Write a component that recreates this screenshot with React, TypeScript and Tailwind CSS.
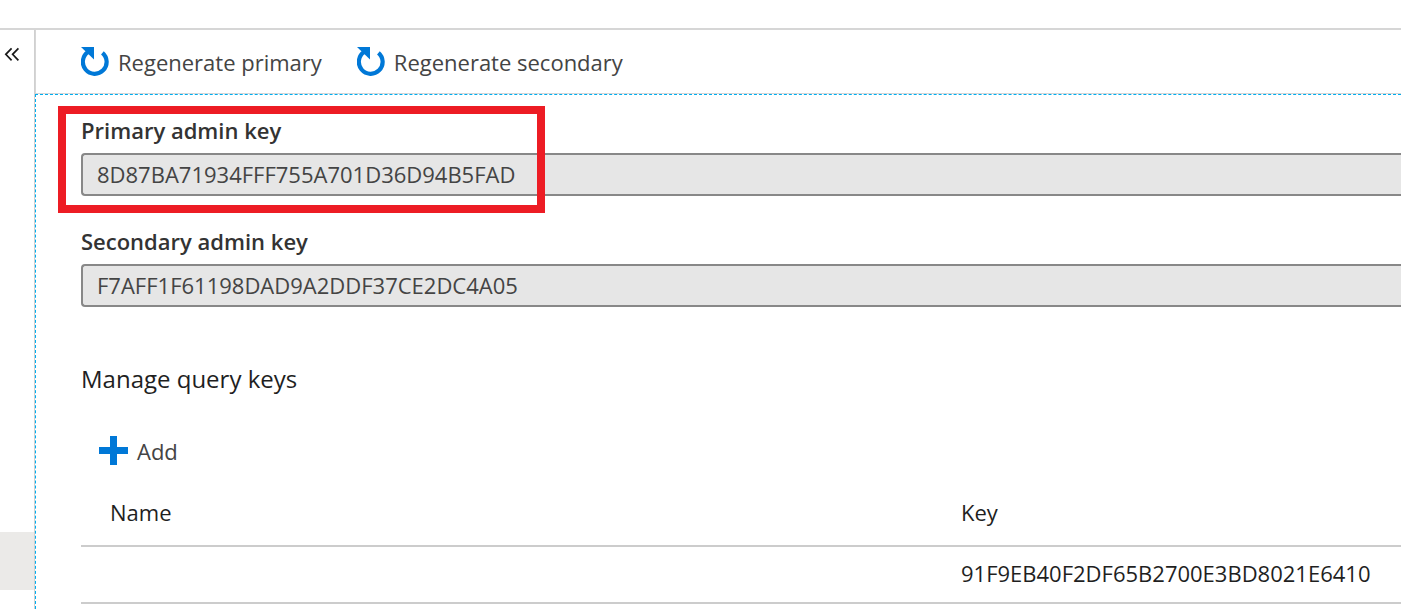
import React from "react";

function CollapseIcon() {
  return (
    <svg viewBox="0 0 16 16" className="block h-4 w-4" fill="none" stroke="#1a1a1a" strokeWidth="1.7" aria-hidden="true">
      <path d="M7.6 2.3 1.8 8.3l5.8 6M14.4 2.3 8.6 8.3l5.8 6" />
    </svg>
  );
}

function RegenerateIcon() {
  return (
    <svg viewBox="0 0 28 30" className="block h-[30px] w-7 shrink-0" aria-hidden="true">
      <path d="M21.4 5.8A11.9 11.9 0 1 1 7 5.1" fill="none" stroke="#0078d7" strokeWidth="4.2" />
      <path d="M0 0H13V12.6Z" fill="#0078d7" />
    </svg>
  );
}

function AddIcon() {
  return (
    <svg viewBox="0 0 29 30" className="block h-[30px] w-[29px] shrink-0" aria-hidden="true">
      <path d="M11 0h7v11h11v7H18v11h-7V18H0v-7h11z" fill="#0078d7" />
    </svg>
  );
}

function CommandButton({ icon, label }: { icon: React.ReactNode; label: string }) {
  return (
    <button type="button" className="flex items-center gap-[9px] whitespace-nowrap text-[22px] leading-8 text-[#444444]">
      {icon}
      <span>{label}</span>
    </button>
  );
}

type KeyFieldProps = { id: string; label: string; value: string; highlighted?: boolean };

function KeyField({ id, label, value, highlighted = false }: KeyFieldProps) {
  return (
    <div className="relative flex flex-col gap-2">
      <label htmlFor={id} className="text-[22px] font-semibold leading-[30px] text-[#333333]">
        {label}
      </label>
      <input
        id={id}
        type="text"
        readOnly
        value={value}
        className="h-[43px] w-full rounded-l-[4px] border-2 border-r-0 border-[#888888] bg-[#e6e6e6] px-3.5 pb-0.5 text-[22px] text-[#444444] outline-none"
      />
      {highlighted && (
        <div className="pointer-events-none absolute -bottom-[17px] -left-[23px] -top-[9px] w-[487px] border-8 border-[#ed1c24]" />
      )}
    </div>
  );
}

const queryKeys = [{ name: "", key: "91F9EB40F2DF65B2700E3BD8021E6410" }];

export default function App() {
  return (
    <div className="flex min-h-screen flex-col overflow-hidden bg-white font-['Open_Sans','Noto_Sans',sans-serif] text-[22px] text-[#1f1f1f]">
      <header className="h-[30px] border-b-2 border-[#d6d6d6]" />
      <div className="flex grow">
        <aside className="flex w-[35px] shrink-0 flex-col justify-between border-r border-[#d0d0d0] pb-[19px]">
          <button type="button" aria-label="Collapse menu" className="px-1 pt-4">
            <CollapseIcon />
          </button>
          <div className="h-[58px] bg-[#ebeae8]" />
        </aside>
        <main className="flex min-w-0 grow flex-col">
          <div className="flex h-16 items-center gap-[35px] border-b border-l border-[#d6d6d6] pl-[45px]">
            <CommandButton icon={<RegenerateIcon />} label="Regenerate primary" />
            <CommandButton icon={<RegenerateIcon />} label="Regenerate secondary" />
          </div>
          <div className="grow border-l border-t border-dashed border-[#00adef] pl-[45px] pt-5">
            <div className="flex flex-col gap-[30px]">
              <KeyField id="primary-key" label="Primary admin key" value="8D87BA71934FFF755A701D36D94B5FAD" highlighted />
              <KeyField id="secondary-key" label="Secondary admin key" value="F7AFF1F61198DAD9A2DDF37CE2DC4A05" />
            </div>
            <h2 className="mt-14 text-2xl">Manage query keys</h2>
            <div className="mt-10 pl-[18px]">
              <CommandButton icon={<AddIcon />} label="Add" />
            </div>
            <table className="mt-[11px] w-full table-fixed border-collapse text-left">
              <thead>
                <tr className="h-[68px] border-b-2 border-[#cccccc]">
                  <th className="w-2/3 pl-[29px] pt-0.5 font-normal">Name</th>
                  <th className="pt-0.5 font-normal">Key</th>
                </tr>
              </thead>
              <tbody>
                {queryKeys.map((row) => (
                  <tr key={row.key} className="h-[57px] border-b-2 border-[#cccccc]">
                    <td className="pb-0.5 pl-[29px]">{row.name}</td>
                    <td className="pb-0.5">{row.key}</td>
                  </tr>
                ))}
              </tbody>
            </table>
          </div>
        </main>
      </div>
    </div>
  );
}
